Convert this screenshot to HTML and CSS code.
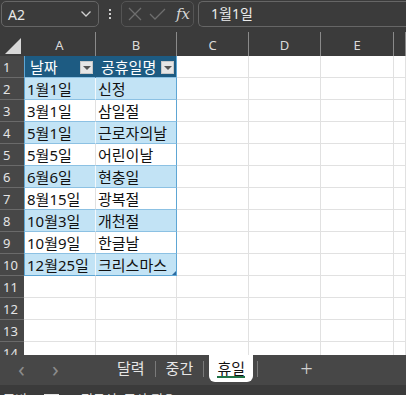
FILE: index.html
```html
<!DOCTYPE html>
<html lang="ko">
<head>
    <meta charset="UTF-8">
    <title>휴일 - Excel</title>
    <link rel="stylesheet" href="styles.css">
</head>
<body>
    <div class="app">
        <!-- name box + formula bar -->
        <div class="formula-row">
            <div class="name-box">
                <span>A2</span>
                <svg class="chev" width="12" height="8" viewBox="0 0 12 8"><path d="M1.5 1.5 L6 6 L10.5 1.5" fill="none" stroke="#d0d0d0" stroke-width="1.3"/></svg>
            </div>
            <div class="dots"><i></i><i></i><i></i></div>
            <div class="fx-buttons">
                <svg width="14" height="14" viewBox="0 0 14 14"><path d="M1 1 L13 13 M13 1 L1 13" stroke="#6e6e6e" stroke-width="1.3"/></svg>
                <svg width="17" height="14" viewBox="0 0 17 14"><path d="M1 7 L6 12 L16 2" fill="none" stroke="#6e6e6e" stroke-width="1.3"/></svg>
                <span class="fx">fx</span>
            </div>
            <div class="formula-input">1월1일</div>
        </div>

        <!-- grid -->
        <div class="sheet">
            <table class="cells">
                <tr class="col-heads">
                    <th class="corner"><span class="tri"></span></th>
                    <th class="w-a">A</th>
                    <th class="w-b">B</th>
                    <th class="w-c">C</th>
                    <th class="w-c">D</th>
                    <th class="w-e">E</th>
                    <th class="w-f"></th>
                </tr>
                <tr>
                    <th class="rh">1</th>
                    <td class="tb-head">날짜<span class="filter"></span></td>
                    <td class="tb-head tb-right">공휴일명<span class="filter"></span></td>
                    <td></td><td></td><td></td><td></td>
                </tr>
                <tr class="band">
                    <th class="rh">2</th>
                    <td class="tb">1월1일</td><td class="tb tb-right">신정</td>
                    <td></td><td></td><td></td><td></td>
                </tr>
                <tr>
                    <th class="rh">3</th>
                    <td class="tb">3월1일</td><td class="tb tb-right">삼일절</td>
                    <td></td><td></td><td></td><td></td>
                </tr>
                <tr class="band">
                    <th class="rh">4</th>
                    <td class="tb">5월1일</td><td class="tb tb-right">근로자의날</td>
                    <td></td><td></td><td></td><td></td>
                </tr>
                <tr>
                    <th class="rh">5</th>
                    <td class="tb">5월5일</td><td class="tb tb-right">어린이날</td>
                    <td></td><td></td><td></td><td></td>
                </tr>
                <tr class="band">
                    <th class="rh">6</th>
                    <td class="tb">6월6일</td><td class="tb tb-right">현충일</td>
                    <td></td><td></td><td></td><td></td>
                </tr>
                <tr>
                    <th class="rh">7</th>
                    <td class="tb">8월15일</td><td class="tb tb-right">광복절</td>
                    <td></td><td></td><td></td><td></td>
                </tr>
                <tr class="band">
                    <th class="rh">8</th>
                    <td class="tb">10월3일</td><td class="tb tb-right">개천절</td>
                    <td></td><td></td><td></td><td></td>
                </tr>
                <tr>
                    <th class="rh">9</th>
                    <td class="tb">10월9일</td><td class="tb tb-right">한글날</td>
                    <td></td><td></td><td></td><td></td>
                </tr>
                <tr class="band last">
                    <th class="rh">10</th>
                    <td class="tb">12월25일</td><td class="tb tb-right">크리스마스<span class="resize"></span></td>
                    <td></td><td></td><td></td><td></td>
                </tr>
                <tr>
                    <th class="rh">11</th>
                    <td></td><td></td><td></td><td></td><td></td><td></td>
                </tr>
                <tr>
                    <th class="rh">12</th>
                    <td></td><td></td><td></td><td></td><td></td><td></td>
                </tr>
                <tr>
                    <th class="rh">13</th>
                    <td></td><td></td><td></td><td></td><td></td><td></td>
                </tr>
                <tr>
                    <th class="rh">14</th>
                    <td></td><td></td><td></td><td></td><td></td><td></td>
                </tr>
            </table>
        </div>

        <!-- sheet tabs -->
        <div class="tab-bar">
            <span class="nav">&lsaquo;</span>
            <span class="nav nav-next">&rsaquo;</span>
            <span class="tab">달력</span>
            <span class="sep"></span>
            <span class="tab">중간</span>
            <span class="sep"></span>
            <span class="tab active">휴일</span>
            <span class="sep"></span>
            <span class="plus">+</span>
        </div>

        <!-- status bar (cut off at the bottom) -->
        <div class="status-bar">
            <span>준비</span>
            <span class="st-icon"></span>
            <span class="st-access">접근성: 조사 필요</span>
        </div>
    </div>
</body>
</html>
```

FILE: styles.css
```css
body {
    margin: 0;
    padding: 0;
    background-color: #3b3b3b;
    font-family: "Noto Sans", "Noto Sans CJK KR", sans-serif;
}
.app {
    width: 406px;
    height: 395px;
    overflow: hidden;
    display: flex;
    flex-direction: column;
}

/* formula bar */
.formula-row {
    height: 32px;
    flex: none;
    display: flex;
    align-items: flex-start;
    padding-top: 1px;
    box-sizing: border-box;
    background-color: #3b3b3b;
}
.name-box {
    width: 98px;
    height: 26px;
    margin-left: 1px;
    box-sizing: border-box;
    border: 1px solid #666;
    border-radius: 5px;
    display: flex;
    align-items: center;
    justify-content: space-between;
    padding: 0 6px 0 6px;
    color: #e8e8e8;
    font-size: 14px;
}
.dots {
    width: 22px;
    display: flex;
    flex-direction: column;
    align-items: center;
    gap: 2px;
    padding-top: 8px;
}
.dots i {
    width: 2px;
    height: 2px;
    background-color: #cfcfcf;
}
.fx-buttons {
    width: 73px;
    height: 26px;
    box-sizing: border-box;
    border: 1px solid #555;
    border-radius: 5px;
    display: flex;
    align-items: center;
    gap: 7px;
    padding-left: 6px;
}
.fx {
    font-family: "DejaVu Serif", "Liberation Serif", serif;
    font-style: italic;
    font-size: 15px;
    color: #d6d6d6;
    margin-left: 3px;
}
.formula-input {
    flex: 1;
    height: 26px;
    margin-left: 4px;
    box-sizing: border-box;
    border: 1px solid #666;
    border-right: none;
    border-radius: 5px 0 0 5px;
    color: #ececec;
    font-size: 14px;
    line-height: 24px;
    padding-left: 12px;
}

/* grid */
.sheet {
    height: 323px;
    flex: none;
    overflow: hidden;
    background-color: #fff;
}
.cells {
    border-collapse: separate;
    border-spacing: 0;
    table-layout: fixed;
    width: 406px;
}
.cells td, .cells th {
    box-sizing: border-box;
    height: 22px;
    padding: 0;
    border-right: 1px solid #e1e1e1;
    border-bottom: 1px solid #e1e1e1;
    font-size: 15px;
    font-weight: normal;
    white-space: nowrap;
    overflow: visible;
}
.col-heads th {
    height: 24px;
    background-color: #3b3b3b;
    color: #dadada;
    font-size: 13px;
    border-right: 1px solid #8a8a8a;
    border-bottom: none;
    text-align: center;
    padding-top: 2px;
}
.corner {
    width: 24px;
    position: relative;
}
.col-heads .corner {
    border-right: 1px solid #3b3b3b;
}
.tri {
    position: absolute;
    right: 2px;
    bottom: 2px;
    width: 0;
    height: 0;
    border-left: 16px solid transparent;
    border-bottom: 16px solid #d8d8d8;
}
.w-a { width: 72px; }
.w-b { width: 81px; }
.w-c { width: 72px; }
.w-e { width: 73px; }
.w-f { width: 12px; }
.cells .rh {
    background-color: #474747;
    color: #e4e4e4;
    font-size: 13px;
    text-align: left;
    padding-left: 3px;
    border-right: none;
    border-bottom: 1px solid #6a6a6a;
}

/* the table A1:B10 */
.cells .tb-head {
    background-color: #1d5b82;
    color: #fff;
    position: relative;
    padding-left: 5px;
    border-right: 1px solid #1d5b82;
    border-bottom: 1px solid #8cc1e3;
}
.cells .tb {
    padding-left: 2px;
    border-bottom: 1px solid #8cc1e3;
    border-right: 1px solid #e1e1e1;
    color: #111;
    position: relative;
}
.cells .band .tb {
    background-color: #c2e3f5;
    border-right-color: #f2f8fc;
}
.cells .tb-right {
    border-right: 1px solid #5ea6d4;
}
.cells .band .tb-right {
    border-right-color: #5ea6d4;
}
.cells tr td.tb:nth-child(2), .cells tr td.tb-head:nth-child(2) {
    border-left: 1px solid #5ea6d4;
}
.cells .last .tb {
    border-bottom-color: #5ea6d4;
}
.filter {
    position: absolute;
    right: 2px;
    top: 5px;
    width: 13px;
    height: 13px;
    box-sizing: border-box;
    background-color: #e6e6e6;
    border: 1px solid #c8c8c8;
}
.filter::after {
    content: "";
    position: absolute;
    left: 2px;
    top: 4px;
    border-left: 4px solid transparent;
    border-right: 4px solid transparent;
    border-top: 4px solid #555;
}
.resize {
    position: absolute;
    right: 0;
    bottom: 0;
    width: 0;
    height: 0;
    border-left: 4px solid transparent;
    border-bottom: 4px solid #2b6aa0;
}

/* sheet tabs */
.tab-bar {
    height: 30px;
    flex: none;
    background-color: #474747;
    display: flex;
    align-items: flex-start;
    color: #e6e6e6;
    font-size: 15px;
}
.nav {
    color: #8c8c8c;
    font-size: 22px;
    line-height: 26px;
    margin-left: 18px;
    width: 14px;
}
.nav-next {
    margin-left: 20px;
    margin-right: 41px;
}
.tab {
    padding: 0 10px;
    height: 27px;
    line-height: 26px;
}
.sep {
    width: 1px;
    height: 16px;
    margin-top: 6px;
    background-color: #7a7a7a;
}
.tab.active {
    background-color: #fff;
    color: #111;
    border-radius: 0 0 6px 6px;
    margin: 0 4px 0 5px;
    width: 44px;
    box-sizing: border-box;
    padding: 0;
    text-align: center;
    position: relative;
}
.tab.active::after {
    content: "";
    position: absolute;
    left: 8px;
    right: 8px;
    bottom: 4px;
    height: 2px;
    background-color: #217346;
}
.plus {
    margin-left: 42px;
    color: #d0d0d0;
    font-size: 22px;
    line-height: 26px;
    font-weight: 300;
}

/* status bar */
.status-bar {
    height: 10px;
    flex: none;
    background-color: #3b3b3b;
    display: flex;
    color: #e6e6e6;
    font-size: 13px;
    line-height: 20px;
    padding-top: 4px;
    padding-left: 3px;
    box-sizing: border-box;
    overflow: hidden;
}
.st-icon {
    width: 13px;
    height: 8px;
    border: 1px solid #e6e6e6;
    margin: 5px 0 0 17px;
}
.st-access {
    margin-left: 22px;
}
```
